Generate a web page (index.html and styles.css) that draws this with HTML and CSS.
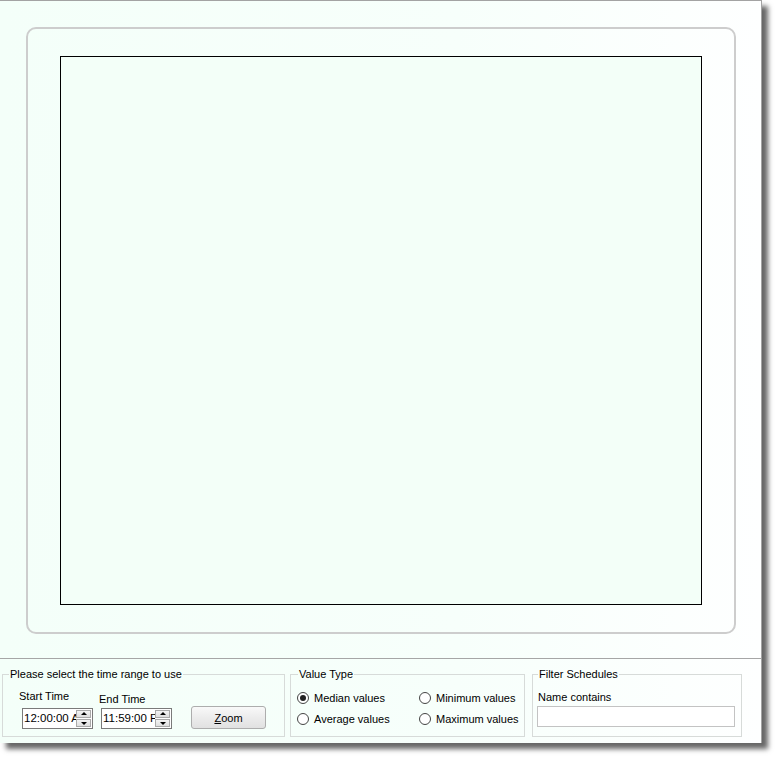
FILE: index.html
```html
<!DOCTYPE html>
<html>
<head>
<meta charset="utf-8">
<link rel="stylesheet" href="styles.css">
</head>
<body>
<div class="window">
  <div class="chart-area">
    <div class="frame">
      <div class="plot"></div>
    </div>
  </div>
  <div class="panel">
    <fieldset class="group g-time">
      <legend>Please select the time range to use</legend>
      <div class="time-row">
        <div class="tcol tcol1">
          <div class="lbl">Start Time</div>
          <div class="spin"><span class="spin-text">12:00:00 AM</span><span class="spin-btns"><span class="sb up"></span><span class="sb down"></span></span></div>
        </div>
        <div class="tcol tcol2">
          <div class="lbl">End Time</div>
          <div class="spin"><span class="spin-text">11:59:00 PM</span><span class="spin-btns"><span class="sb up"></span><span class="sb down"></span></span></div>
        </div>
        <button class="btn"><u>Z</u>oom</button>
      </div>
    </fieldset>
    <fieldset class="group g-value">
      <legend>Value Type</legend>
      <div class="radios">
        <label class="radio"><span class="circle checked"></span>Median values</label>
        <label class="radio"><span class="circle"></span>Minimum values</label>
        <label class="radio"><span class="circle"></span>Average values</label>
        <label class="radio"><span class="circle"></span>Maximum values</label>
      </div>
    </fieldset>
    <fieldset class="group g-filter">
      <legend>Filter Schedules</legend>
      <div class="lbl fl">Name contains</div>
      <div class="input"></div>
    </fieldset>
  </div>
</div>
</body>
</html>
```
FILE: styles.css
```css
html, body {
  margin: 0;
  padding: 0;
  background: #ffffff;
}
body {
  width: 777px;
  height: 760px;
  font-family: "Liberation Sans", Arial, sans-serif;
  font-size: 11px;
  color: #000;
  overflow: hidden;
}
.window {
  width: 761px;
  height: 742px;
  border-top: 1px solid #a3a3a3;
  border-right: 1px solid #a3a3a3;
  display: flex;
  flex-direction: column;
  background: linear-gradient(to right, #f4fff9 0%, #f7fffb 60%, #feffff 100%);
  box-shadow: 6px 6px 5px rgba(0, 0, 0, 0.6);
}
.chart-area {
  height: 658px;
  border-bottom: 1px solid #a6a6a6;
  padding: 26px 0 0 26px;
  box-sizing: border-box;
}
.frame {
  width: 710px;
  height: 607px;
  box-sizing: border-box;
  border: 2px solid #cdcdcd;
  border-radius: 10px;
  padding: 27px 0 0 32px;
}
.plot {
  width: 642px;
  height: 549px;
  box-sizing: border-box;
  border: 1px solid #000;
  background: #f3fff8;
}
.panel {
  flex: 1;
  display: flex;
  padding: 9px 0 0 2px;
  box-sizing: border-box;
}
.group {
  margin: 0;
  padding: 0;
  border: 1px solid #d7dbd9;
  min-width: 0;
  height: 69px;
  box-sizing: border-box;
}
.group legend {
  padding: 0 1px;
  line-height: 13px;
  font-size: 11px;
}
.g-time {
  width: 283px;
}
.g-time legend { margin-left: 6px; }
.g-value {
  width: 235px;
  margin-left: 5px;
}
.g-value legend { margin-left: 7px; }
.g-filter {
  width: 210px;
  margin-left: 7px;
}
.g-filter legend { margin-left: 5px; }

.lbl {
  line-height: 13px;
  white-space: nowrap;
}
.time-row {
  display: flex;
  align-items: flex-end;
  padding-top: 9px;
}
.tcol {
  display: flex;
  flex-direction: column;
}
.tcol1 { margin-left: 16px; }
.tcol1 .lbl { margin-bottom: 5px; }
.tcol1 .spin { margin-left: 3px; }
.tcol2 { margin-left: 6px; }
.tcol2 .lbl { margin-bottom: 2px; }
.tcol2 .spin { margin-left: 2px; }
.spin {
  width: 71px;
  height: 21px;
  box-sizing: border-box;
  border: 1px solid #7a7a7a;
  background: #fff;
  display: flex;
  align-items: stretch;
  overflow: hidden;
}
.spin-text {
  flex: 1;
  overflow: hidden;
  white-space: nowrap;
  line-height: 19px;
  padding-left: 1px;
  font-size: 11.5px;
}
.spin-btns {
  width: 16px;
  display: flex;
  flex-direction: column;
  padding: 1px 1px 1px 0;
  gap: 1px;
  box-sizing: border-box;
}
.sb {
  flex: 1;
  border: 1px solid #a9a9a9;
  background: linear-gradient(#f4f4f4, #dedede);
  position: relative;
}
.sb::after {
  content: "";
  position: absolute;
  left: 50%;
  top: 50%;
  margin-left: -3px;
  border-left: 3px solid transparent;
  border-right: 3px solid transparent;
}
.sb.up::after {
  margin-top: -2px;
  border-bottom: 3px solid #000;
}
.sb.down::after {
  margin-top: -1px;
  border-top: 3px solid #000;
}
.btn {
  margin: 0 0 0 19px;
  width: 75px;
  height: 23px;
  padding: 0;
  font-family: "Liberation Sans", Arial, sans-serif;
  font-size: 11px;
  color: #000;
  border: 1px solid #adadad;
  border-radius: 3px;
  background: linear-gradient(#f9f9f9 0%, #ececec 50%, #e1e1e1 100%);
}
.btn u { text-decoration: underline; }

.radios {
  display: grid;
  grid-template-columns: 122px 100px;
  grid-auto-rows: 21px;
  padding: 6px 0 0 6px;
}
.radio {
  display: flex;
  align-items: center;
  white-space: nowrap;
}
.circle {
  width: 12px;
  height: 12px;
  box-sizing: border-box;
  border: 1px solid #444;
  border-radius: 50%;
  background: #fff;
  margin-right: 5px;
  display: flex;
  align-items: center;
  justify-content: center;
}
.circle.checked::after {
  content: "";
  width: 6px;
  height: 6px;
  border-radius: 50%;
  background: #222;
}
.fl {
  padding-top: 10px;
  margin-left: 5px;
  line-height: 13px;
}
.input {
  margin: 2px 0 0 4px;
  width: 198px;
  height: 21px;
  box-sizing: border-box;
  border: 1px solid #c3c3c3;
  background: #fff;
}
```
